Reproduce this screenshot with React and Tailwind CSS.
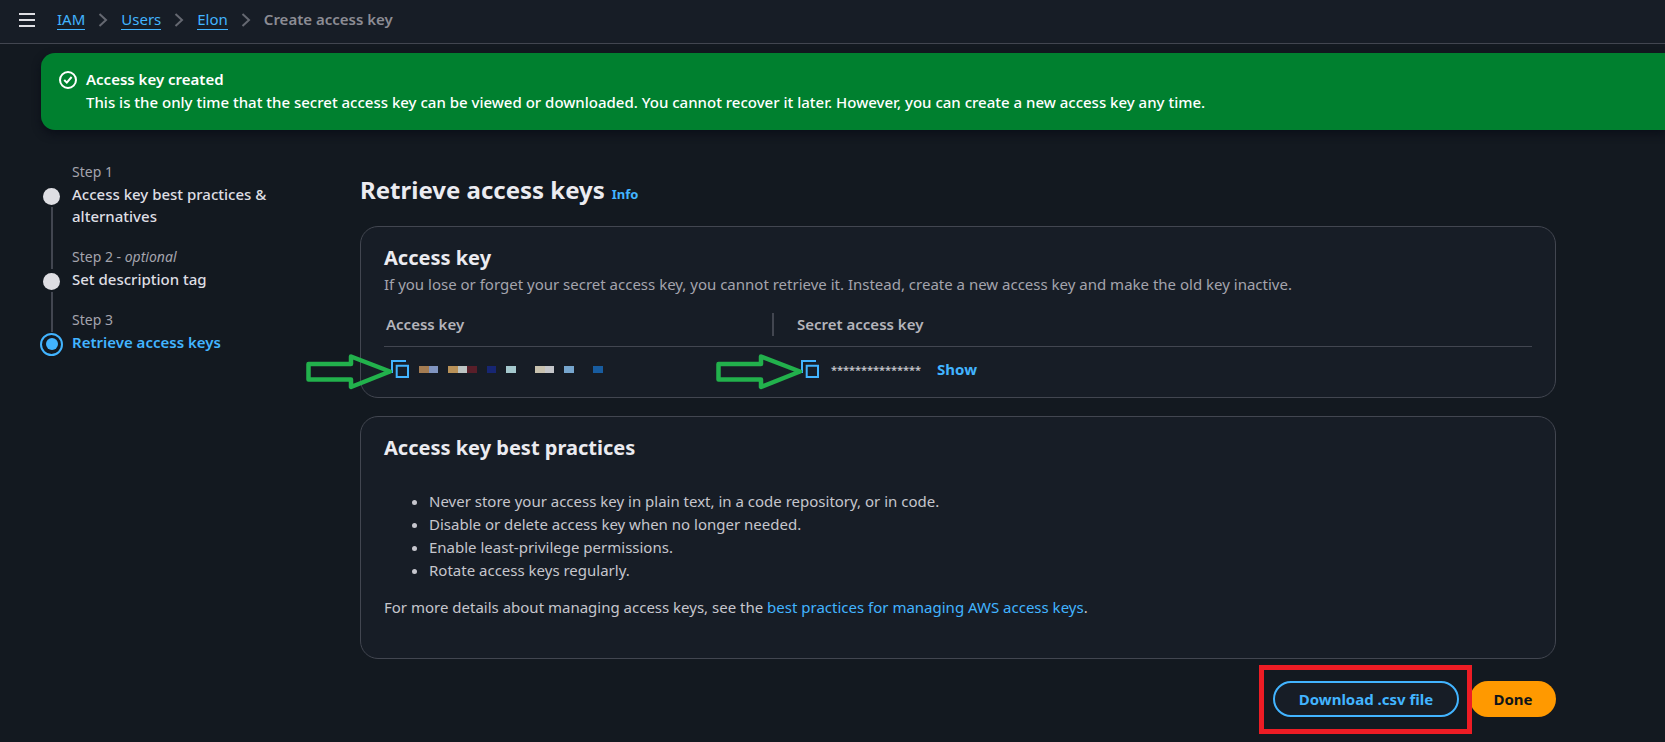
const ACCESS_KEY_BLOCKS = [
  { x: 0, w: 10, fill: '#a47c52' },
  { x: 10, w: 9, fill: '#8094c0' },
  { x: 29, w: 10, fill: '#b89158' },
  { x: 39, w: 9, fill: '#bcc4c3' },
  { x: 48, w: 10, fill: '#591e29' },
  { x: 68, w: 9, fill: '#172673' },
  { x: 87, w: 10, fill: '#a4c8cd' },
  { x: 116, w: 10, fill: '#c8c1ae' },
  { x: 126, w: 9, fill: '#c4c5c9' },
  { x: 145, w: 10, fill: '#76a5cd' },
  { x: 174, w: 10, fill: '#185c9f' },
];

const CRUMBS = ['IAM', 'Users', 'Elon'];

const PRACTICES = [
  'Never store your access key in plain text, in a code repository, or in code.',
  'Disable or delete access key when no longer needed.',
  'Enable least-privilege permissions.',
  'Rotate access keys regularly.',
];

function MenuIcon() {
  return (
    <svg width="16" height="16" viewBox="0 0 16 16" aria-hidden="true">
      <path d="M0 2h16M0 8h16M0 14h16" stroke="#dedee3" strokeWidth="2" />
    </svg>
  );
}

function Chevron() {
  return (
    <svg width="10" height="14" viewBox="0 0 10 14" fill="none" aria-hidden="true">
      <path d="M1.5 1l6.5 6L1.5 13" stroke="#656871" strokeWidth="2" />
    </svg>
  );
}

function CheckIcon() {
  return (
    <svg width="18" height="18" viewBox="0 0 18 18" fill="none" stroke="#fff" strokeWidth="2" aria-hidden="true">
      <circle cx="9" cy="9" r="8" />
      <path d="M5.2 9l2.6 2.6L12.6 6" />
    </svg>
  );
}

function CopyIcon() {
  return (
    <svg width="18" height="18" viewBox="0 0 18 18" fill="none" stroke="#42b4ff" strokeWidth="2" aria-hidden="true">
      <path d="M1 13V1h14" />
      <path d="M5.7 5.7H17V17H5.7z" />
    </svg>
  );
}

function Arrow() {
  return (
    <svg
      className="pointer-events-none absolute -left-[85px] -top-[7px] z-10"
      width="88"
      height="37"
      viewBox="0 0 88 37"
      fill="none"
      aria-hidden="true"
    >
      <path
        d="M2.5 11H45V3.5L84 18.5L45 34V26.5H2.5Z"
        stroke="#22b14c"
        strokeWidth="4.5"
        strokeLinejoin="round"
      />
    </svg>
  );
}

function CopyButton({ label }) {
  return (
    <span className="relative flex">
      <button type="button" aria-label={label} className="flex">
        <CopyIcon />
      </button>
      <Arrow />
    </span>
  );
}

function Step({ label, optional, title, active, last }) {
  return (
    <li className="flex gap-[9px]">
      <div className="flex w-[23px] flex-col items-center">
        <div className="h-[25px]" />
        <div className="flex h-[22px] w-[23px] shrink-0 items-center justify-center">
          {active ? (
            <span className="flex size-[23px] shrink-0 items-center justify-center rounded-full border-2 border-[#42b4ff]">
              <span className="size-3 rounded-full bg-[#42b4ff]" />
            </span>
          ) : (
            <span className="size-[17px] rounded-full bg-[#dedee3]" />
          )}
        </div>
        {!last && <div className="-mb-6 w-[2px] grow bg-[#424650]" />}
      </div>
      <div className={last ? 'flex-1' : 'flex-1 pb-[18px]'}>
        <div className="text-[14px] leading-[23px] text-[#a4a4ad]">
          {label}
          {optional && (
            <>
              {' - '}
              <em>optional</em>
            </>
          )}
        </div>
        <a
          href="#step"
          className={
            active
              ? 'block text-[15px] font-semibold leading-[22px] text-[#42b4ff]'
              : 'block text-[15px] font-medium leading-[22px] text-[#dedee3]'
          }
        >
          {title}
        </a>
      </div>
    </li>
  );
}

export default function App() {
  return (
    <div className="min-h-screen overflow-x-hidden bg-[#131920] font-['Noto_Sans',sans-serif] text-[15px] leading-[23px] text-[#c6c6cd]">
      <header className="flex h-11 items-center border-b border-[#424650] bg-[#171d26] pb-1 pl-[19px]">
        <button type="button" aria-label="Open navigation" className="mr-[22px]">
          <MenuIcon />
        </button>
        <nav aria-label="Breadcrumb" className="flex items-center gap-[13px]">
          {CRUMBS.map((crumb) => (
            <span key={crumb} className="flex items-center gap-[13px]">
              <a href="#crumb" className="border-b border-[#42b4ff] leading-5 text-[#42b4ff]">
                {crumb}
              </a>
              <Chevron />
            </span>
          ))}
          <span className="font-semibold text-[#8c8c94]">Create access key</span>
        </nav>
      </header>

      <div className="pl-[41px] pt-[9px]">
        <div
          role="status"
          className="flex gap-[9px] rounded-l-[14px] bg-[#00802f] pb-4 pl-[18px] pt-[15px] text-white shadow-[0_4px_8px_#0b0f18]"
        >
          <div className="pt-[3px]">
            <CheckIcon />
          </div>
          <div>
            <div className="font-semibold">Access key created</div>
            <div className="font-medium">
              This is the only time that the secret access key can be viewed or downloaded. You cannot recover it
              later. However, you can create a new access key any time.
            </div>
          </div>
        </div>
      </div>

      <div className="flex pl-10 pr-[109px] pt-[30px]">
        <nav aria-label="Steps" className="w-[320px] shrink-0">
          <ol className="w-[256px]">
            <Step label="Step 1" title="Access key best practices & alternatives" />
            <Step label="Step 2" optional title="Set description tag" />
            <Step label="Step 3" title="Retrieve access keys" active last />
          </ol>
        </nav>

        <main className="min-w-0 flex-1">
          <div className="flex items-baseline gap-[7px] pt-3">
            <h1 className="text-[24px] font-bold leading-9 text-[#ebebf0]">Retrieve access keys</h1>
            <a href="#info" className="text-[13px] font-bold text-[#42b4ff]">
              Info
            </a>
          </div>

          <section className="mt-[18px] rounded-[18px] border border-[#424650] bg-[#171d26] px-[23px] pb-[17px] pt-4">
            <h2 className="text-[20px] font-bold leading-[30px] text-[#ebebf0]">Access key</h2>
            <p className="text-[#a4a4ad]">
              If you lose or forget your secret access key, you cannot retrieve it. Instead, create a new access key
              and make the old key inactive.
            </p>
            <table className="mt-[9px] w-full table-fixed text-left">
              <thead>
                <tr className="border-b border-[#424650]">
                  <th className="w-[390px] pb-[10px] pt-2 font-semibold text-[#b4b4bb]">
                    <div className="border-r-2 border-[#424650] pl-[2px]">Access key</div>
                  </th>
                  <th className="pb-[10px] pl-[23px] pt-2 font-semibold text-[#b4b4bb]">Secret access key</th>
                </tr>
              </thead>
              <tbody>
                <tr>
                  <td className="pl-[7px] pt-[11px]">
                    <div className="flex h-[22px] items-center gap-[10px]">
                      <CopyButton label="Copy access key" />
                      <svg width="184" height="7" viewBox="0 0 184 7" role="img" aria-label="Hidden access key">
                        {ACCESS_KEY_BLOCKS.map((block) => (
                          <rect key={block.x} x={block.x} y="0" width={block.w} height="7" fill={block.fill} />
                        ))}
                      </svg>
                    </div>
                  </td>
                  <td className="pl-[27px] pt-[11px]">
                    <div className="flex h-[22px] items-center">
                      <CopyButton label="Copy secret access key" />
                      <span className="ml-3 text-[11px] font-semibold">***************</span>
                      <button type="button" className="ml-4 font-bold text-[#42b4ff]">
                        Show
                      </button>
                    </div>
                  </td>
                </tr>
              </tbody>
            </table>
          </section>

          <section className="mt-[18px] rounded-[18px] border border-[#424650] bg-[#171d26] px-[23px] pb-[39px] pt-4">
            <h2 className="text-[20px] font-bold leading-[30px] text-[#ebebf0]">Access key best practices</h2>
            <ul className="mt-[27px] list-disc pl-[45px]">
              {PRACTICES.map((practice) => (
                <li key={practice}>{practice}</li>
              ))}
            </ul>
            <p className="mt-[14px]">
              For more details about managing access keys, see the{' '}
              <a href="#best-practices" className="text-[#42b4ff]">
                best practices for managing AWS access keys
              </a>
              .
            </p>
          </section>

          <div className="mt-[22px] flex justify-end gap-[11px] pb-6">
            <div className="relative">
              <button
                type="button"
                className="h-9 w-[186px] rounded-full border-2 border-[#42b4ff] bg-[#171d26] font-bold text-[#42b4ff]"
              >
                Download .csv file
              </button>
              <span className="pointer-events-none absolute -bottom-[17px] -left-[14px] -right-[13px] -top-4 z-10 border-[5px] border-[#ed1c24]" />
            </div>
            <button type="button" className="h-9 w-[86px] rounded-full bg-[#ff9900] font-bold text-[#0f141a]">
              Done
            </button>
          </div>
        </main>
      </div>
    </div>
  );
}
